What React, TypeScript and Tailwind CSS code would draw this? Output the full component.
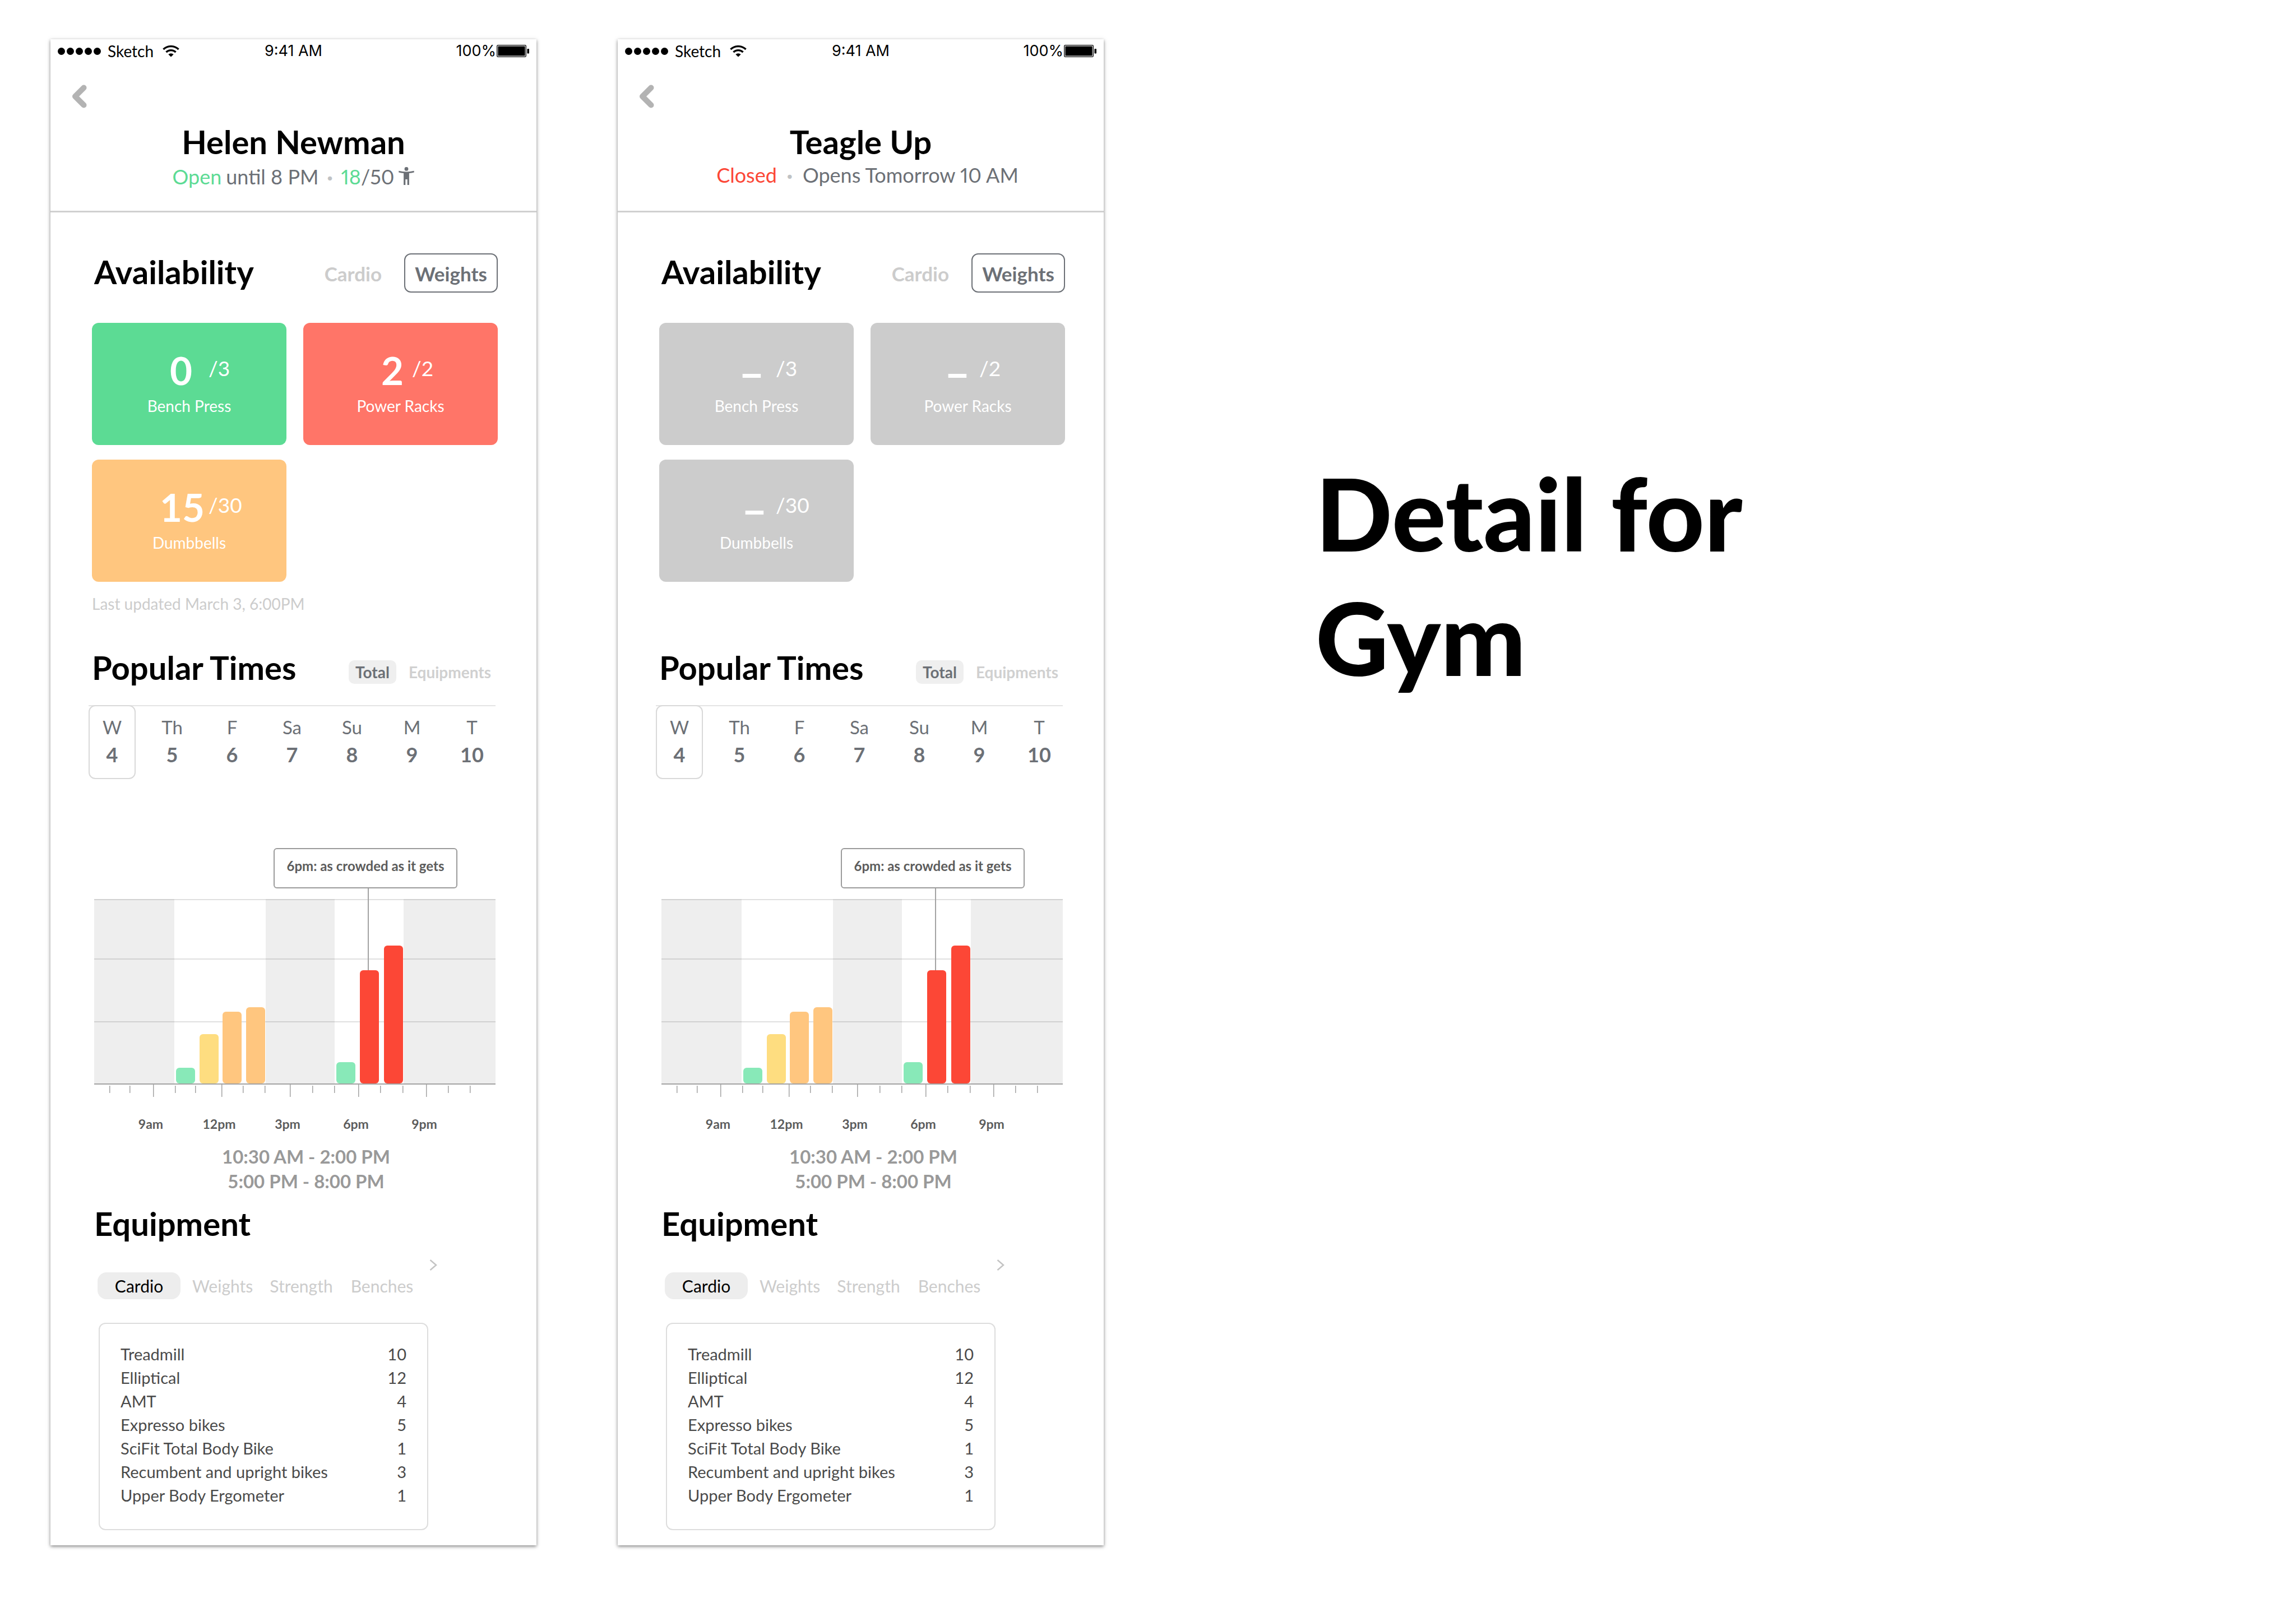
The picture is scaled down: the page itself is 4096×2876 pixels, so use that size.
import React from "react";

type Tile = { value: string; cell: string; total: string; label: string; color: string };

type Gym = {
  name: string;
  status: React.ReactNode;
  tiles: Tile[];
  updated: string;
};

const DAYS = [
  ["W", "4"],
  ["Th", "5"],
  ["F", "6"],
  ["Sa", "7"],
  ["Su", "8"],
  ["M", "9"],
  ["T", "10"],
];

const BARS = [
  { x: 146, top: 320, fill: "#88e9b8" },
  { x: 188, top: 260, fill: "#fedd80" },
  { x: 229, top: 220, fill: "#ffc67f" },
  { x: 271, top: 212, fill: "#ffc67f" },
  { x: 432, top: 310, fill: "#88e9b8" },
  { x: 474, top: 146, fill: "#fc4736" },
  { x: 517, top: 102, fill: "#fc4736" },
];

const CLOSED_BANDS = [
  { x: 0, w: 143 },
  { x: 306, w: 123 },
  { x: 552, w: 164 },
];

const LONG_TICKS = [105, 227, 349, 471, 592];
const SHORT_TICKS = [28, 64, 145, 181, 266, 305, 390, 429, 511, 551, 632, 671];
const HOURS = ["9am", "12pm", "3pm", "6pm", "9pm"];

const MACHINES = [
  ["Treadmill", "10"],
  ["Elliptical", "12"],
  ["AMT", "4"],
  ["Expresso bikes", "5"],
  ["SciFit Total Body Bike", "1"],
  ["Recumbent and upright bikes", "3"],
  ["Upper Body Ergometer", "1"],
];

function PersonIcon() {
  return (
    <svg viewBox="0 0 28 32" className="ml-2 h-8 w-7" fill="#6c7076" aria-hidden="true">
      <circle cx="14" cy="3.4" r="3.4" />
      <path d="M0.4 6.8 Q7 8.4 14 8.4 Q21 8.4 27.6 6.800 L27.800 9.400 Q23.500 10.500 18.900 11 V32 H15.700 V22 H12.300 V32 H9.100 V11 Q4.500 10.500 0.200 9.400 Z" />
    </svg>
  );
}

const GYMS: Gym[] = [
  {
    name: "Helen Newman",
    status: (
      <p className="flex h-[52px] items-start justify-center text-[36px] leading-[52px] text-[#6c7076] proportional-nums">
        <span className="text-[#5cdb94]">Open</span>
        <span className="ml-2">until 8 PM</span>
        <span className="mx-[15px] font-black text-[#c0c2c4]">·</span>
        <span className="text-[#5cdb94]">18</span>
        <span>/50</span>
        <span className="pt-[9px]">
          <PersonIcon />
        </span>
      </p>
    ),
    tiles: [
      { value: "0", cell: "ml-[110px] w-[98px] text-[69px] leading-[86px]", total: "/3", label: "Bench Press", color: "bg-[#5cdb94]" },
      { value: "2", cell: "ml-[124px] w-[70px] text-[69px] leading-[86px]", total: "/2", label: "Power Racks", color: "bg-[#ff7568]" },
      { value: "15", cell: "ml-[114px] w-[94px] text-[69px] leading-[86px]", total: "/30", label: "Dumbbells", color: "bg-[#ffc67f]" },
    ],
    updated: "Last updated March 3, 6:00PM",
  },
  {
    name: "Teagle Up",
    status: (
      <p className="flex h-[52px] items-start justify-center pl-6 text-[36px] leading-[46px] text-[#6c7076] proportional-nums">
        <span className="text-[#fc4736]">Closed</span>
        <span className="mx-[18px] font-black text-[#c0c2c4]">·</span>
        <span>Opens Tomorrow 10 AM</span>
      </p>
    ),
    tiles: [
      { value: "–", cell: "ml-[122px] w-[86px] text-[80px] leading-[92px]", total: "/3", label: "Bench Press", color: "bg-[#cccccc]" },
      { value: "–", cell: "ml-[116px] w-[78px] text-[80px] leading-[92px]", total: "/2", label: "Power Racks", color: "bg-[#cccccc]" },
      { value: "–", cell: "ml-[132px] w-[76px] text-[80px] leading-[92px]", total: "/30", label: "Dumbbells", color: "bg-[#cccccc]" },
    ],
    updated: "",
  },
];

function StatusBar() {
  return (
    <div className="grid grid-cols-[1fr_auto_1fr] px-[13px] font-['Inter',sans-serif] text-[27px] leading-[42px] text-black">
      <div className="flex items-center">
        <div className="flex gap-[3px]">
          {[0, 1, 2, 3, 4].map((i) => (
            <span key={i} className="size-[13px] rounded-full bg-black" />
          ))}
        </div>
        <span className="ml-3 font-['Lato',sans-serif] text-[28px]">Sketch</span>
        <svg viewBox="0 0 30 21" className="ml-4 h-[21px] w-[30px]" aria-hidden="true">
          <path d="M1.400 7 A20 20 0 0 1 28.600 7" fill="none" stroke="#000" strokeWidth="3.400" />
          <path d="M6.400 12.100 A12.500 12.500 0 0 1 23.600 12.100" fill="none" stroke="#000" strokeWidth="3.400" />
          <path d="M15 20.600 L10.300 16 A7 7 0 0 1 19.700 16 Z" fill="#000" />
        </svg>
      </div>
      <span>9:41 AM</span>
      <div className="flex items-center justify-end">
        <span>100%</span>
        <svg viewBox="0 0 58 22" className="ml-px h-[22px] w-[58px]" aria-hidden="true">
          <rect x="0.700" y="0.700" width="51.600" height="20.600" rx="1.500" fill="none" stroke="#000" strokeWidth="1.300" />
          <rect x="2.400" y="2.400" width="48.200" height="17.200" rx="0.500" fill="#000" />
          <rect x="54.400" y="7" width="3.600" height="8.400" rx="1" fill="#000" />
        </svg>
      </div>
    </div>
  );
}

function Chart() {
  return (
    <figure className="mx-1 mt-[123px]">
      <div className="ml-[320px] w-[328px] rounded-md border-2 border-[#9b9b9b] pt-[12px] pb-5 text-center text-[24px] leading-9 font-bold text-[#5c5c5c]">
        6pm: as crowded as it gets
      </div>
      <svg viewBox="0 0 716 373" className="block w-full" role="img" aria-label="Visitors by hour">
        {CLOSED_BANDS.map((b) => (
          <rect key={b.x} x={b.x} y="19" width={b.w} height="330" fill="#eeeeee" />
        ))}
        {[19, 125, 237].map((y) => (
          <rect key={y} x="0" y={y} width="716" height="2" fill="#000000" fillOpacity="0.12" />
        ))}
        <rect x="0" y="348" width="716" height="2" fill="#a3a3a3" />
        <rect x="488" y="0" width="2" height="147" fill="#a3a3a3" />
        {BARS.map((b) => (
          <rect key={b.x} x={b.x} y={b.top} width="34" height={348 - b.top} rx="6" fill={b.fill} />
        ))}
        {LONG_TICKS.map((x) => (
          <rect key={x} x={x} y="350" width="1.500" height="22" fill="#a3a3a3" />
        ))}
        {SHORT_TICKS.map((x) => (
          <rect key={x} x={x - 1} y="352" width="1.500" height="13" fill="#a3a3a3" />
        ))}
      </svg>
      <div className="mt-[31px] ml-10 grid w-[610px] grid-cols-5 text-center text-[23px] leading-8 font-bold text-[#5c5c5c]">
        {HOURS.map((h) => (
          <span key={h}>{h}</span>
        ))}
      </div>
      <figcaption className="mt-5 pl-10 text-center text-[33px] leading-[44px] font-bold text-[#999999]">
        10:30 AM - 2:00 PM
        <br />
        5:00 PM - 8:00 PM
      </figcaption>
    </figure>
  );
}

function GymCard({ gym }: { gym: Gym }) {
  return (
    <article className="bg-white pb-[27px] shadow-[0_2px_6px_rgba(0,0,0,0.5)]">
      <header className="border-b-[3px] border-[#d0d0d0] pb-[35px]">
        <StatusBar />
        <button type="button" aria-label="Back" className="mt-[39px] ml-[37px] block">
          <svg viewBox="0 0 28 42" className="h-[42px] w-7" fill="none" aria-hidden="true">
            <path d="M22.500 5.500 L7 21 L22.500 36.500" stroke="#b3b3b3" strokeWidth="10" strokeLinecap="round" strokeLinejoin="round" />
          </svg>
        </button>
        <h2 className="mt-6 text-center text-[58px] leading-[72px] font-bold">{gym.name}</h2>
        {gym.status}
      </header>

      <div className="pr-[69px] pl-[74px]">
        <section>
          <div className="flex items-center pt-[73px]">
            <h3 className="ml-1 self-start text-[58px] leading-[66px] font-bold">Availability</h3>
            <button type="button" className="ml-auto pt-[3px] text-[35px] leading-[67px] font-bold text-[#cccccc]">
              Cardio
            </button>
            <button
              type="button"
              className="ml-10 h-[70px] w-[167px] rounded-xl border-2 border-[#6c7076] pt-[3px] text-[35px] leading-[63px] font-bold text-[#6c7076]"
            >
              Weights
            </button>
          </div>
          <ul className="mt-[54px] grid grid-cols-2 gap-x-[30px] gap-y-[26px] text-white">
            {gym.tiles.map((t) => (
              <li key={t.label} className={`rounded-xl pt-[42px] pb-[50px] ${t.color}`}>
                <p className="flex h-[86px] items-start">
                  <span className={`text-center font-bold ${t.cell}`}>{t.value}</span>
                  <span className="text-[37px] leading-[78px]">{t.total}</span>
                </p>
                <p className="text-center text-[28px] leading-[40px]">{t.label}</p>
              </li>
            ))}
          </ul>
          <p className="mt-[19px] h-10 text-[28px] leading-10 text-[#cccccc]">{gym.updated}</p>
        </section>

        <section>
          <div className="mt-[61px] flex h-[62px] items-end">
            <h3 className="self-start text-[58px] leading-[66px] font-bold">Popular Times</h3>
            <button
              type="button"
              className="ml-auto h-[42px] w-[85px] rounded-[10px] bg-[#efefef] text-[28px] leading-[42px] font-bold text-[#6c7076]"
            >
              Total
            </button>
            <button type="button" className="mr-3 ml-[22px] text-[28px] leading-[42px] font-bold text-[#d0d0d0]">
              Equipments
            </button>
          </div>
          <ul className="mt-[38px] mr-1 -ml-[6px] flex justify-between border-t-2 border-[#e4e4e4] text-center text-[#6c7076]">
            {DAYS.map(([day, date], i) => (
              <li
                key={day}
                className={`-mt-[2px] w-[84px] rounded-xl border-2 pt-[14px] pb-4 ${i === 0 ? "border-[#d9d9d9]" : "border-transparent"}`}
              >
                <button type="button" className="block w-full">
                  <span className="block text-[33px] leading-[46px]">{day}</span>
                  <span className="block text-[36px] leading-[52px] font-bold">{date}</span>
                </button>
              </li>
            ))}
          </ul>
          <Chart />
        </section>

        <section>
          <h3 className="mt-[21px] ml-1 text-[58px] leading-[66px] font-bold">Equipment</h3>
          <button type="button" aria-label="More categories" className="mt-[31px] ml-[602px] block">
            <svg viewBox="0 0 14 20" className="h-5 w-[14px]" fill="none" aria-hidden="true">
              <path d="M1.500 1 L12 10 L1.500 19" stroke="#c4c4c4" strokeWidth="2.500" />
            </svg>
          </button>
          <div className="mt-[3px] ml-[10px] flex text-[30px] leading-[48px] text-[#cccccc]">
            <button type="button" className="w-[148px] rounded-2xl bg-[#ededed] text-black">
              Cardio
            </button>
            <button type="button" className="ml-[21px]">Weights</button>
            <button type="button" className="ml-[30px]">Strength</button>
            <button type="button" className="ml-8">Benches</button>
          </div>
          <div className="mt-[42px] mr-[124px] ml-3 rounded-xl border-2 border-[#dddddd] px-[37px] pt-[33px] pb-[39px]">
            <table className="w-full text-[29px] leading-[42px] text-[#4a4a4a]">
              <tbody>
                {MACHINES.map(([name, count]) => (
                  <tr key={name}>
                    <th scope="row" className="p-0 text-left font-normal">
                      {name}
                    </th>
                    <td className="p-0 text-right">{count}</td>
                  </tr>
                ))}
              </tbody>
            </table>
          </div>
        </section>
      </div>
    </article>
  );
}

export default function App() {
  return (
    <main className="grid min-h-screen grid-cols-[867fr_867fr_1982fr] items-start gap-x-[145px] bg-white pt-[70px] pl-[90px] font-['Lato',sans-serif] text-black">
      {GYMS.map((g) => (
        <GymCard key={g.name} gym={g} />
      ))}
      <h1 className="pt-[733px] pl-[233px] text-[180px] leading-[222px] font-black">
        Detail for
        <br />
        Gym
      </h1>
    </main>
  );
}
